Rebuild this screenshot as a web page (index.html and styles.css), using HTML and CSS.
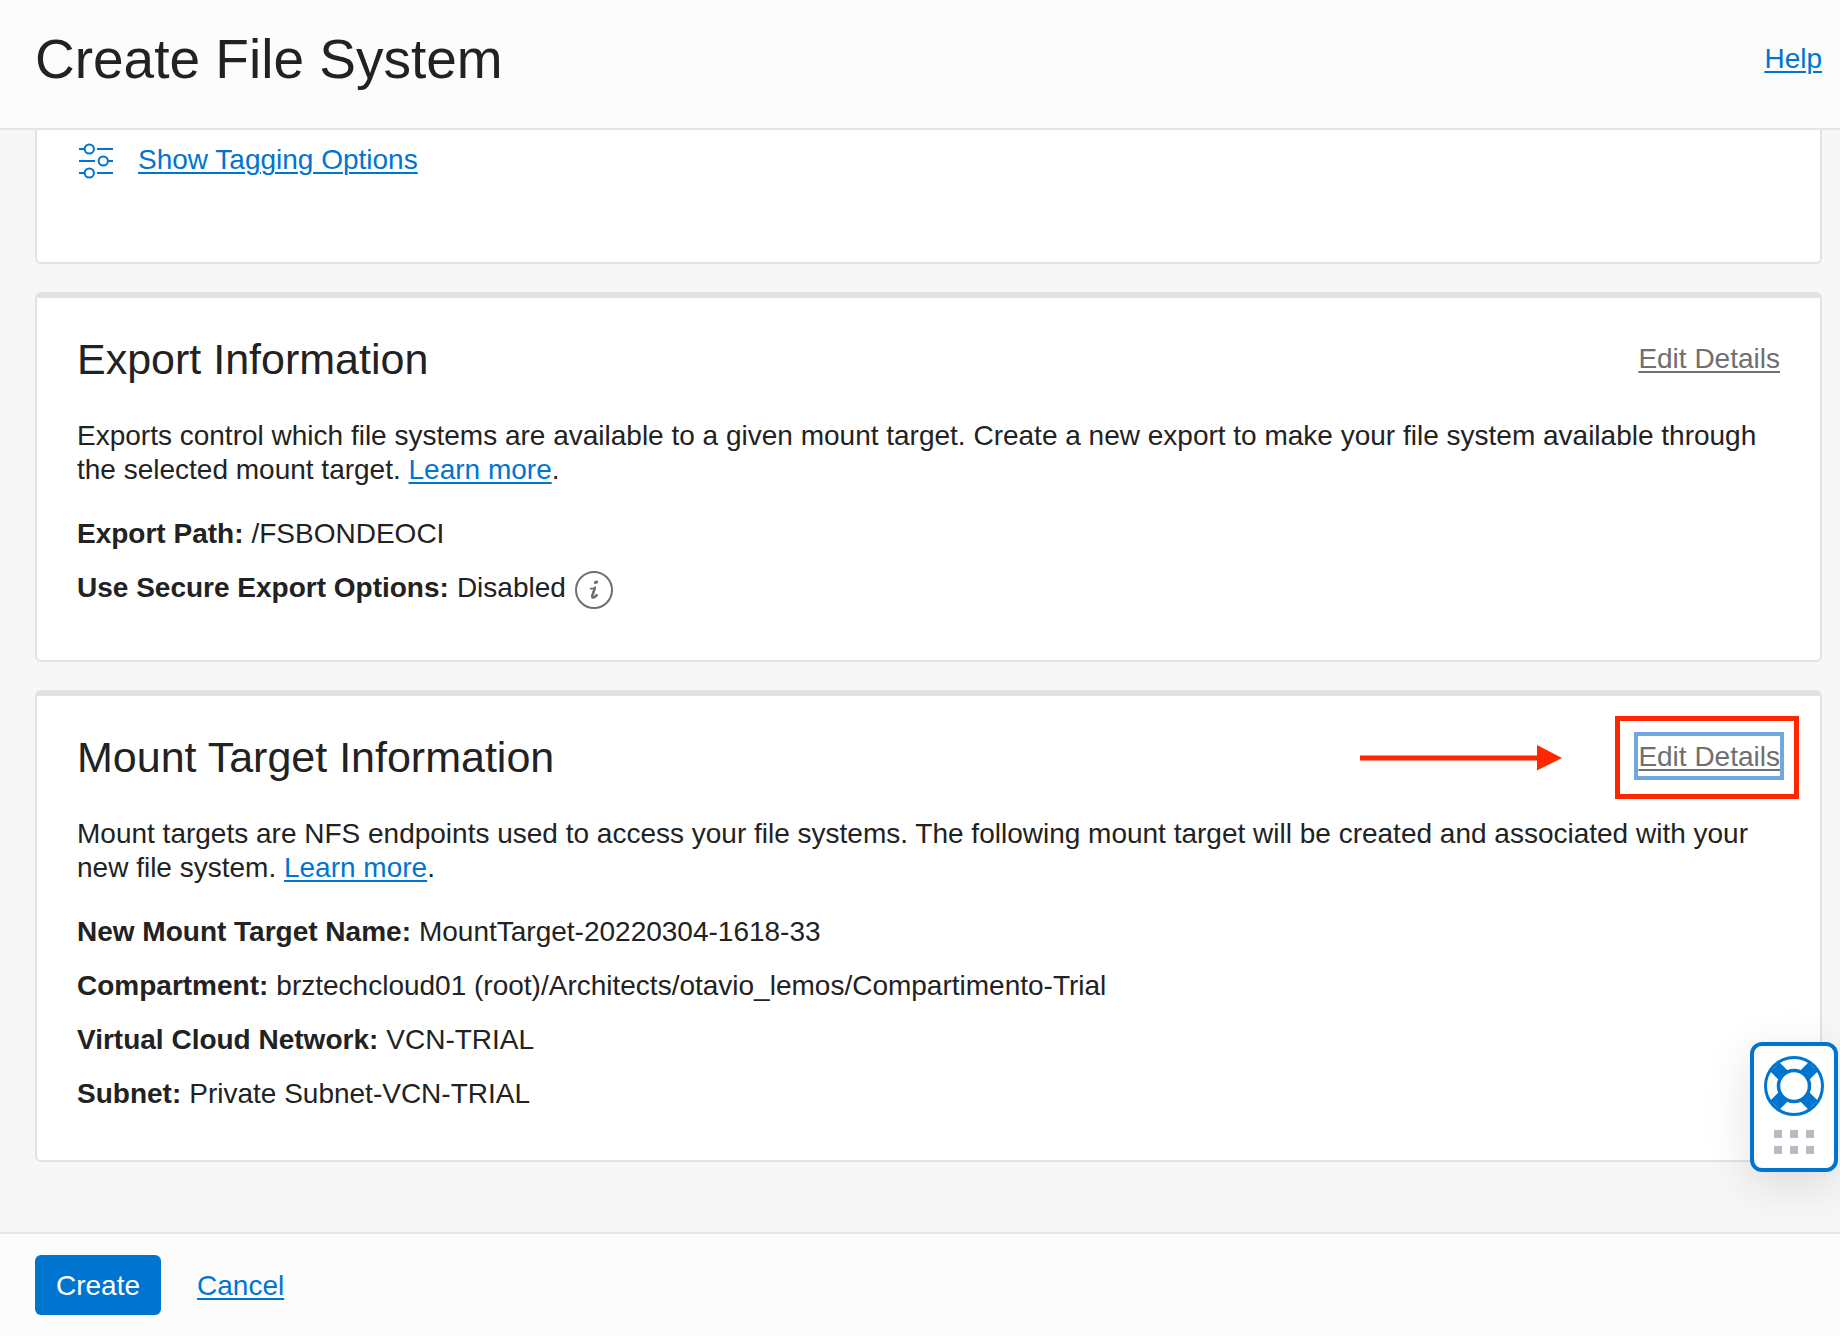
FILE: index.html
```html
<!DOCTYPE html>
<html lang="en">
<head>
<meta charset="utf-8">
<meta name="viewport" content="width=device-width, initial-scale=1">
<title>Create File System</title>
<link rel="stylesheet" href="styles.css">
</head>
<body>
<header class="page-header">
  <h1 class="page-title">Create File System</h1>
  <a class="link" href="#help">Help</a>
</header>

<main class="content">
  <section class="card card-continued">
    <svg class="tagging-icon" viewBox="0 0 38 38" fill="none" stroke="currentColor" stroke-width="2" aria-hidden="true">
      <path d="M2 6h6M20 6h16M2 18h16M31 18h5M2 30h6M20 30h16"/>
      <circle cx="12.3" cy="6" r="4.6"/>
      <circle cx="26.3" cy="18" r="4.6"/>
      <circle cx="12.3" cy="30" r="4.6"/>
    </svg>
    <a class="link" href="#tagging">Show Tagging Options</a>
  </section>

  <section class="card">
    <div class="card-head">
      <h2 class="card-title">Export Information</h2>
      <a class="link link-edit" href="#edit-export">Edit Details</a>
    </div>
    <p class="card-text">Exports control which file systems are available to a given mount target. Create a new export to make your file system available through the selected mount target. <a class="link" href="#exports">Learn more</a>.</p>
    <dl class="fields">
      <div class="field"><dt>Export Path:</dt><dd>/FSBONDEOCI</dd></div>
      <div class="field">
        <dt>Use Secure Export Options:</dt><dd>Disabled</dd>
        <dd class="field-info">
          <button class="info-button" type="button" aria-label="More information">
            <svg viewBox="0 0 40 40" width="40" height="40" fill="none" stroke="currentColor" aria-hidden="true">
              <circle cx="20" cy="19" r="18" stroke-width="2"/>
              <path d="M16.500 17.600c1.800.2 3.600-.2 4.800-1.400" stroke-width="1.600" stroke-linecap="round"/>
              <path d="M20.800 17l-2.500 7.600c-.7 2.800 1.800 2.600 4.400-.4" stroke-width="2.600" stroke-linecap="round" stroke-linejoin="round"/>
              <ellipse cx="22" cy="11.200" rx="2.300" ry="1.600" transform="rotate(-20 22 11.200)" fill="currentColor" stroke="none"/>
            </svg>
          </button>
        </dd>
      </div>
    </dl>
  </section>

  <section class="card">
    <div class="card-head">
      <h2 class="card-title">Mount Target Information</h2>
      <div class="callout">
        <svg class="callout-arrow" viewBox="0 0 203 26" aria-hidden="true">
          <path d="M0 10.500h177V0l25 13-25 12.500v-10H0z" fill="currentColor"/>
        </svg>
        <a class="link link-edit is-focused" href="#edit-mount">Edit Details</a>
      </div>
    </div>
    <p class="card-text">Mount targets are NFS endpoints used to access your file systems. The following mount target will be created and associated with your new file system. <a class="link" href="#mount-targets">Learn more</a>.</p>
    <dl class="fields">
      <div class="field"><dt>New Mount Target Name:</dt><dd>MountTarget-20220304-1618-33</dd></div>
      <div class="field"><dt>Compartment:</dt><dd>brztechcloud01 (root)/Architects/otavio_lemos/Compartimento-Trial</dd></div>
      <div class="field"><dt>Virtual Cloud Network:</dt><dd>VCN-TRIAL</dd></div>
      <div class="field"><dt>Subnet:</dt><dd>Private Subnet-VCN-TRIAL</dd></div>
    </dl>
  </section>
</main>

<footer class="page-footer">
  <button class="button-primary" type="submit">Create</button>
  <a class="link" href="#cancel">Cancel</a>
</footer>

<button class="support" type="button" aria-label="Support">
  <svg viewBox="0 0 60 60" width="60" height="60" fill="none" stroke="currentColor" aria-hidden="true">
    <path d="M11 11l8 8M49 11l-8 8M11 49l8-8M49 49l-8-8" stroke-width="13"/>
    <circle cx="30" cy="30" r="28.500" stroke-width="3"/>
    <circle cx="30" cy="30" r="15.500" stroke-width="3.500"/>
  </svg>
  <svg class="support-grip" viewBox="0 0 40 24" width="40" height="24" fill="currentColor" aria-hidden="true">
    <path d="M0 0h8v8H0zM16 0h8v8h-8zM32 0h8v8h-8zM0 16h8v8H0zM16 16h8v8h-8zM32 16h8v8h-8z"/>
  </svg>
</button>
</body>
</html>
```
FILE: styles.css
```css
:root {
  --blue: #0075cf;
  --text: #222;
  --grey: #6f6f6f;
  --card-border: #dfe3e6;
  --bar-border: #e5e5e5;
  --red: #ff2600;
}

* {
  box-sizing: border-box;
}

body {
  margin: 0;
  min-height: 100vh;
  display: flex;
  flex-direction: column;
  background: #f7f7f7;
  color: var(--text);
  font: 28px/34px "Helvetica Neue", "Liberation Sans", Arial, sans-serif;
}

h1, h2, p, dl, dd {
  margin: 0;
  font-weight: 400;
}

.link {
  color: var(--blue);
  text-decoration: underline;
  text-decoration-thickness: 2px;
  text-underline-offset: 3px;
}

.page-header {
  display: flex;
  align-items: center;
  justify-content: space-between;
  padding: 25px 18px 35px 35px;
  background: #fcfcfc;
  border-bottom: 2px solid var(--bar-border);
}

.page-title {
  font-size: 55px;
  line-height: 68px;
}

.content {
  flex: 1;
  display: flex;
  flex-direction: column;
  gap: 28px;
  padding: 0 18px 70px 35px;
}

.card {
  padding: 37px 40px 49px;
  background: #fff;
  border: 2px solid var(--card-border);
  border-top-width: 6px;
  border-radius: 6px;
}

.card-continued {
  display: flex;
  align-items: flex-start;
  gap: 23px;
  padding: 13px 40px 81px;
  border-top: 0;
  border-radius: 0 0 6px 6px;
}

.tagging-icon {
  width: 38px;
  height: 38px;
  color: var(--blue);
}

.card-head {
  display: flex;
  align-items: center;
  justify-content: space-between;
  margin-bottom: 36px;
}

.card-title {
  font-size: 43px;
  line-height: 48px;
}

.link-edit {
  display: block;
  margin-bottom: 2px;
  padding-top: 2px;
  line-height: 38px;
  color: var(--grey);
}

.is-focused {
  outline: 4px solid #70a7df;
}

.callout {
  position: relative;
}

.callout::after {
  content: "";
  position: absolute;
  inset: -20px -19px -21px -23px;
  border: 5px solid var(--red);
  pointer-events: none;
}

.callout-arrow {
  position: absolute;
  top: 9px;
  right: 217px;
  width: 203px;
  height: 26px;
  color: var(--red);
}

.fields {
  display: flex;
  flex-direction: column;
  gap: 20px;
  margin-top: 30px;
}

.field {
  display: flex;
  align-items: flex-start;
  gap: 8px;
}

dt {
  font-weight: 700;
}

.info-button {
  display: block;
  padding: 0;
  border: 0;
  background: none;
  color: var(--grey);
}

.info-button svg {
  display: block;
}

.page-footer {
  display: flex;
  align-items: center;
  gap: 36px;
  padding: 21px 35px;
  background: #fcfcfc;
  border-top: 2px solid var(--bar-border);
}

.button-primary {
  height: 60px;
  padding: 2px 21px 0;
  border: 0;
  border-radius: 6px;
  background: var(--blue);
  color: #fff;
  font: inherit;
}

.page-footer .link {
  padding-top: 2px;
}

.support {
  position: fixed;
  right: 2px;
  bottom: 164px;
  display: flex;
  flex-direction: column;
  align-items: center;
  gap: 14px;
  width: 88px;
  padding: 10px 0 14px;
  border: 4px solid var(--blue);
  border-radius: 12px;
  background: #fff;
  color: var(--blue);
  box-shadow: 0 12px 48px rgba(0, 0, 0, 0.12);
}

.support-grip {
  color: #b5bac2;
}
```
